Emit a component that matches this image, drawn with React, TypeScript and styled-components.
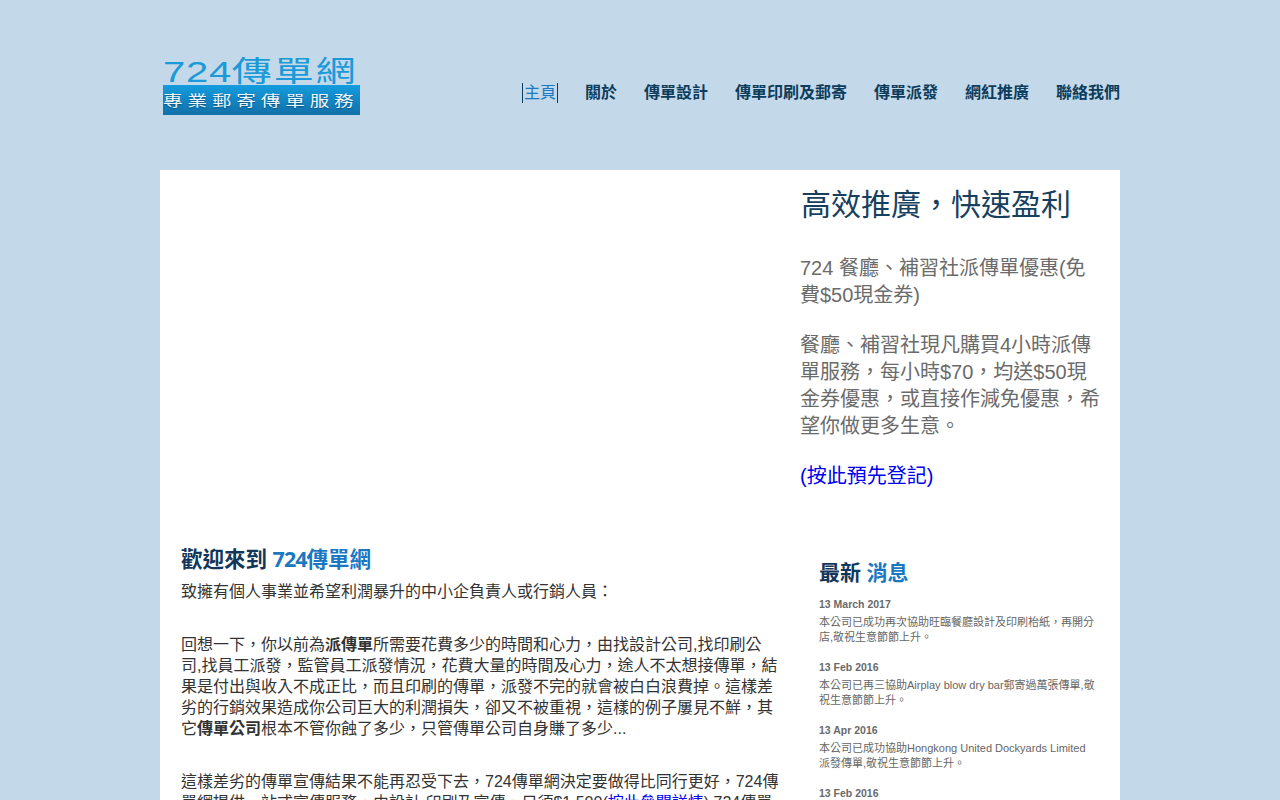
import React from "react";
import styled, { createGlobalStyle } from "styled-components";

const SANS = `Arial, "Liberation Sans", "Noto Sans CJK TC", sans-serif`;
const HEAD = `"Open Sans", "Noto Sans CJK TC", sans-serif`;

const Global = createGlobalStyle`
  html, body { margin: 0; padding: 0; height: 800px; overflow: hidden; background: #c3d9e9; }
  body { font-family: ${SANS}; }
`;

const Page = styled.div`
  width: 960px;
  margin: 0 auto;
`;

const Header = styled.header`
  height: 170px;
  display: flex;
  align-items: flex-start;
  justify-content: space-between;
`;

const Logo = styled.div`
  margin: 56px 0 0 3px;
  width: 197px;
  display: flex;
  flex-direction: column;
`;

const LogoTitle = styled.div`
  font-family: "Liberation Sans", "Noto Sans CJK TC", sans-serif;
  font-size: 29px;
  line-height: 33px;
  height: 29px;
  letter-spacing: 1.3px;
  color: #1a9ad9;
  white-space: nowrap;
  transform: scaleX(1.38);
  transform-origin: left center;
`;

const LogoDigits = styled.span`
  letter-spacing: 0.5px;
`;

const LogoBand = styled.div`
  height: 30px;
  background: linear-gradient(#149ddf, #1270a8);
  overflow: hidden;
`;

const LogoSlogan = styled.div`
  color: #eef6fb;
  font-family: "Noto Sans CJK TC", serif;
  font-size: 15px;
  line-height: 29px;
  letter-spacing: 3.8px;
  white-space: nowrap;
  text-shadow: 0 1px 1px rgba(0, 50, 90, 0.5);
  transform: scaleX(1.3);
  transform-origin: left center;
`;

const Nav = styled.nav`
  display: flex;
  margin-top: 83px;
  gap: 27px;
`;

const NavItem = styled.a<{ $active?: boolean }>`
  font-family: ${SANS};
  font-size: 16px;
  line-height: 20px;
  font-weight: ${(p) => (p.$active ? 400 : 700)};
  color: ${(p) => (p.$active ? "#1a78c2" : "#0e3c5c")};
  border-left: ${(p) => (p.$active ? "1px solid #0e3c5c" : "none")};
  border-right: ${(p) => (p.$active ? "1px solid #0e3c5c" : "none")};
  padding: ${(p) => (p.$active ? "0 1px" : "0")};
  white-space: nowrap;
`;

const Main = styled.main`
  background: #fff;
  height: 630px;
  overflow: hidden;
`;

const Hero = styled.section`
  display: flex;
  height: 375px;
`;

const Slot = styled.div`
  width: 640px;
  flex: none;
`;

const Promo = styled.div`
  padding: 17px 20px 0 0;
  flex: 1;
`;

const PromoTitle = styled.h2`
  margin: 0 0 0 1px;
  font-size: 30px;
  line-height: 36px;
  font-weight: 400;
  color: #17405f;
  white-space: nowrap;
`;

const PromoText = styled.p<{ $top: number }>`
  margin: ${(p) => p.$top}px 0 0;
  font-size: 20px;
  line-height: 27px;
  color: #6b6b6b;
`;

const PromoLink = styled.a`
  display: block;
  margin-top: 23px;
  font-size: 20px;
  line-height: 27px;
  color: #0000ee;
`;

const Lower = styled.section`
  display: flex;
`;

const Article = styled.article`
  width: 598px;
  flex: none;
  margin-left: 21px;
`;

const Heading = styled.h3<{ $size: number }>`
  margin: 0;
  font-family: ${HEAD};
  font-size: ${(p) => p.$size}px;
  line-height: 28px;
  font-weight: 700;
  color: #12375a;
  white-space: nowrap;
`;

const Accent = styled.span`
  color: #1a78c2;
`;

const HeadDigits = styled.span`
  letter-spacing: -1px;
`;

const Body = styled.p<{ $top: number }>`
  margin: ${(p) => p.$top}px 0 0;
  font-size: 16px;
  line-height: 21px;
  color: #333;
`;

const Strong = styled.b`
  font-weight: 700;
`;

const BlueLink = styled.a`
  color: #0000ee;
`;

const News = styled.aside`
  width: 276px;
  margin-left: 40px;
  padding-top: 13px;
`;

const NewsItem = styled.div<{ $top: number }>`
  margin-top: ${(p) => p.$top}px;
`;

const NewsDate = styled.div`
  font-size: 10.5px;
  font-weight: 700;
  line-height: 15px;
  color: #6a6a6a;
`;

const NewsText = styled.div`
  margin-top: 3px;
  font-size: 11px;
  line-height: 15px;
  color: #666;
`;

const news = [
  ["13 March 2017", "本公司已成功再次協助旺臨餐廳設計及印刷枱紙，再開分店,敬祝生意節節上升。"],
  ["13 Feb 2016", "本公司已再三協助Airplay blow dry bar郵寄過萬張傳單,敬祝生意節節上升。"],
  ["13 Apr 2016", "本公司已成功協助Hongkong United Dockyards Limited 派發傳單,敬祝生意節節上升。"],
  ["13 Feb 2016", "本公司已成功協助客戶派發傳單,敬祝生意節節上升。"],
];

const links = ["關於", "傳單設計", "傳單印刷及郵寄", "傳單派發", "網紅推廣", "聯絡我們"];

export default function App() {
  return (
    <Page lang="zh-Hant">
      <Global />
      <Header>
        <Logo>
          <LogoTitle><LogoDigits>724</LogoDigits>傳單網</LogoTitle>
          <LogoBand>
            <LogoSlogan>專業郵寄傳單服務</LogoSlogan>
          </LogoBand>
        </Logo>
        <Nav>
          <NavItem $active>主頁</NavItem>
          {links.map((l) => (
            <NavItem key={l}>{l}</NavItem>
          ))}
        </Nav>
      </Header>
      <Main>
        <Hero>
          <Slot />
          <Promo>
            <PromoTitle>高效推廣，快速盈利</PromoTitle>
            <PromoText $top={32}>724 餐廳、補習社派傳單優惠(免費$50現金券)</PromoText>
            <PromoText $top={23}>餐廳、補習社現凡購買4小時派傳單服務，每小時$70，均送$50現金券優惠，或直接作減免優惠，希望你做更多生意。</PromoText>
            <PromoLink>(按此預先登記)</PromoLink>
          </Promo>
        </Hero>
        <Lower>
          <Article>
            <Heading $size={21.5}>歡迎來到 <Accent><HeadDigits>724</HeadDigits>傳單網</Accent></Heading>
            <Body $top={8}>致擁有個人事業並希望利潤暴升的中小企負責人或行銷人員：</Body>
            <Body $top={32}>回想一下，你以前為<Strong>派傳單</Strong>所需要花費多少的時間和心力，由找設計公司,找印刷公司,找員工派發，監管員工派發情況，花費大量的時間及心力，途人不太想接傳單，結果是付出與收入不成正比，而且印刷的傳單，派發不完的就會被白白浪費掉。這樣差劣的行銷效果造成你公司巨大的利潤損失，卻又不被重視，這樣的例子屢見不鮮，其它<Strong>傳單公司</Strong>根本不管你蝕了多少，只管傳單公司自身賺了多少...</Body>
            <Body $top={32}>這樣差劣的傳單宣傳結果不能再忍受下去，724傳單網決定要做得比同行更好，724傳單網提供一站式宣傳服務，由設計,印刷及宣傳，只須$1,500(<BlueLink>按此參閱詳情</BlueLink>) 724傳單</Body>
          </Article>
          <News>
            <Heading $size={21}>最新 <Accent>消息</Accent></Heading>
            {news.map(([d, t], i) => (
              <NewsItem key={i} $top={i === 0 ? 11 : 15}>
                <NewsDate>{d}</NewsDate>
                <NewsText>{t}</NewsText>
              </NewsItem>
            ))}
          </News>
        </Lower>
      </Main>
    </Page>
  );
}
